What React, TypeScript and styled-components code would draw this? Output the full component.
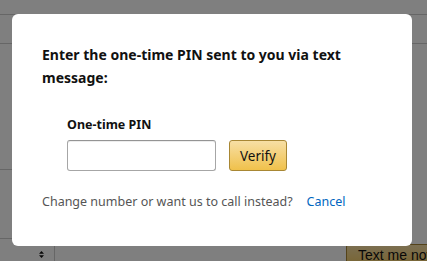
import React from 'react';
import styled, { createGlobalStyle } from 'styled-components';

const GlobalStyle = createGlobalStyle`
  html, body {
    margin: 0;
    padding: 0;
    width: 427px;
    height: 261px;
    overflow: hidden;
    background: #ffffff;
    font-family: "Noto Sans", "Open Sans", Arial, sans-serif;
  }
`;

const Page = styled.div`
  position: relative;
  width: 427px;
  height: 261px;
  overflow: hidden;
  background: #ffffff;
`;

const PageRow = styled.div<{ $h: number; $line?: boolean }>`
  height: ${(p) => p.$h}px;
  border-bottom: ${(p) => (p.$line ? '1px solid #cccccc' : 'none')};
  box-sizing: border-box;
`;

const SideRow = styled.div<{ $h: number }>`
  width: 40px;
  height: ${(p) => p.$h}px;
  border-bottom: 1px solid #cccccc;
  box-sizing: border-box;
`;

const BottomBar = styled.div`
  display: flex;
  align-items: flex-start;
  height: 30px;
`;

const SelectBox = styled.div`
  width: 55px;
  height: 100%;
  border-right: 1px solid #cccccc;
  display: flex;
  align-items: flex-start;
  justify-content: flex-end;
  padding: 12px 10px 0 0;
  box-sizing: border-box;
`;

const Spacer = styled.div`
  flex: 1;
`;

const TextMeButton = styled.div`
  width: 81px;
  height: 30px;
  margin-top: 5px;
  background: linear-gradient(#f7dfa5, #f0c14b);
  border: 1px solid #a88734;
  border-right: none;
  border-radius: 3px 0 0 0;
  font-family: "Liberation Sans", Arial, sans-serif;
  font-size: 14px;
  line-height: 17px;
  color: #111111;
  padding: 2px 0 0 11px;
  white-space: nowrap;
  overflow: hidden;
  box-sizing: border-box;
`;

const Backdrop = styled.div`
  position: absolute;
  inset: 0;
  background: rgba(0, 0, 0, 0.5);
`;

const Modal = styled.div`
  position: absolute;
  left: 12px;
  top: 14px;
  width: 400px;
  height: 232px;
  box-sizing: border-box;
  background: #ffffff;
  border-radius: 6px;
  padding: 29px 30px 0 30px;
`;

const Heading = styled.h4`
  margin: 0;
  font-size: 14px;
  line-height: 23px;
  font-weight: 700;
  color: #111111;
  width: 320px;
`;

const Field = styled.div`
  margin: 28px 0 0 25px;
  display: flex;
  flex-direction: column;
`;

const Label = styled.label`
  font-size: 12.5px;
  font-weight: 700;
  color: #111111;
  line-height: 16px;
  margin-bottom: 7px;
`;

const Controls = styled.div`
  display: flex;
  gap: 13px;
`;

const PinInput = styled.input`
  width: 149px;
  height: 31px;
  box-sizing: border-box;
  border: 1px solid #a6a6a6;
  border-top-color: #949494;
  border-radius: 3px;
  box-shadow: 0 1px 0 rgba(255, 255, 255, 0.5), 0 1px 0 rgba(0, 0, 0, 0.07) inset;
  padding: 3px 7px;
  font-size: 13px;
  outline: none;
`;

const VerifyButton = styled.button`
  width: 58px;
  height: 31px;
  box-sizing: border-box;
  border: 1px solid #a88734;
  border-radius: 3px;
  background: linear-gradient(to bottom, #f7dfa5, #f0c14b);
  font-family: inherit;
  font-size: 13.5px;
  color: #111111;
  padding: 0;
  cursor: pointer;
`;

const Footer = styled.div`
  margin-top: 22px;
  display: flex;
  gap: 14px;
  font-size: 12.5px;
  line-height: 18px;
  color: #555555;
`;

const Link = styled.a`
  color: #0066c0;
  text-decoration: none;
  cursor: pointer;
`;

const UpDown = () => (
  <svg width="5" height="7" viewBox="0 0 5 7">
    <path d="M2.5 0 L5 2.8 H0 Z" fill="#111" />
    <path d="M2.5 7 L5 4.2 H0 Z" fill="#111" />
  </svg>
);

export default function App() {
  return (
    <>
      <GlobalStyle />
      <Page>
        <PageRow $h={15} $line />
        <PageRow $h={29} $line />
        <SideRow $h={126} />
        <SideRow $h={69} />
        <BottomBar>
          <SelectBox>
            <UpDown />
          </SelectBox>
          <Spacer />
          <TextMeButton>Text me now</TextMeButton>
        </BottomBar>
        <Backdrop />
        <Modal>
          <Heading>Enter the one-time PIN sent to you via text message:</Heading>
          <Field>
            <Label>One-time PIN</Label>
            <Controls>
              <PinInput type="text" />
              <VerifyButton>Verify</VerifyButton>
            </Controls>
          </Field>
          <Footer>
            <span>Change number or want us to call instead?</span>
            <Link>Cancel</Link>
          </Footer>
        </Modal>
      </Page>
    </>
  );
}
